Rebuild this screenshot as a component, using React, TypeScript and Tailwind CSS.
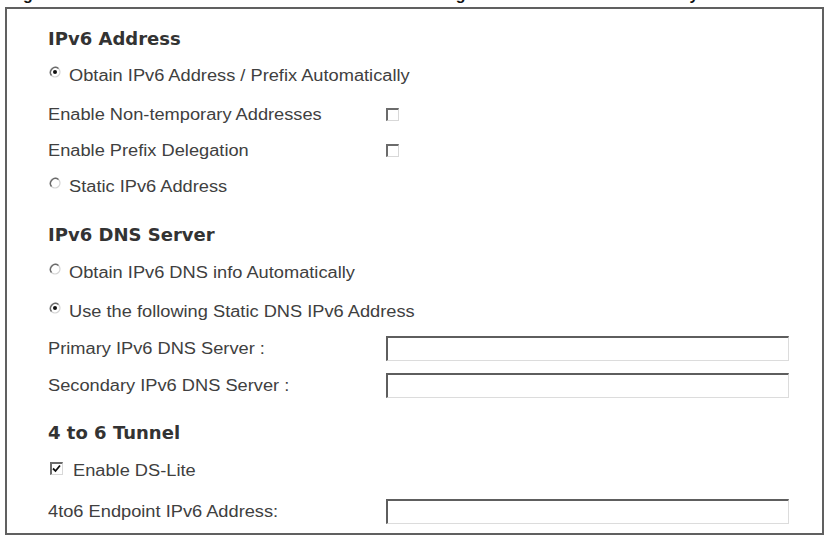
import { ReactNode } from "react";

const body = "font-['Liberation_Sans',Arial,sans-serif]";
const head = "font-['DejaVu_Sans',Verdana,sans-serif]";

// old-style sunken radio button
const Radio = ({ checked }: { checked?: boolean }) => (
  <svg width="12" height="12" viewBox="0 0 12 12" className="ml-[1px] mb-[6px] mr-[8px] shrink-0">
    <circle cx="6" cy="6" r="5" fill="#fff" stroke="#d4d4d4" strokeWidth="1.2" />
    <path d="M9.5 2.5 A5 5 0 0 0 2.5 9.5" fill="none" stroke="#6a6a6a" strokeWidth="1.4" />
    {checked && <circle cx="6" cy="6" r="2" fill="#111" />}
  </svg>
);

const Checkbox = ({ checked }: { checked?: boolean }) => (
  <span className="relative inline-block w-[13px] h-[13px] shrink-0 bg-white border-t-2 border-l-2 border-t-[#6b6b6b] border-l-[#6b6b6b] border-b border-r border-b-[#d8d8d8] border-r-[#d8d8d8]">
    {checked && (
      <svg width="11" height="11" viewBox="0 0 11 11" className="absolute -left-[1px] -top-[1px]">
        <path d="M2 5.5 L4.5 8 L9 2.5" fill="none" stroke="#111" strokeWidth="1.8" />
      </svg>
    )}
  </span>
);

const TextBox = () => (
  <input
    type="text"
    className="w-[403px] h-[25px] bg-white outline-none border-t-2 border-l-2 border-t-[#5e5e5e] border-l-[#5e5e5e] border-b border-r border-b-[#dcdcdc] border-r-[#dcdcdc]"
  />
);

const Row = ({ children, mt = "" }: { children: ReactNode; mt?: string }) => (
  <div className={`flex items-center h-9 ${mt}`}>{children}</div>
);

const Heading = ({ children, mt = "" }: { children: ReactNode; mt?: string }) => (
  <div className={`flex items-center h-9 ${mt}`}>
    <h2 className={`${head} inline-block origin-left scale-x-[1.06] font-bold text-[17px] text-[#333]`}>{children}</h2>
  </div>
);

const Label = ({ children, wide }: { children: ReactNode; wide?: boolean }) => (
  <span className={`${wide ? "w-[338px] shrink-0" : ""}`}>
    <span className={`${body} inline-block origin-left scale-x-[1.14] whitespace-nowrap text-[16px] text-[#404040]`}>{children}</span>
  </span>
);

export default function App() {
  return (
    <div className="w-[826px] h-[540px] bg-white overflow-hidden">
      {/* tail of the caption above the panel */}
      <div className={`h-[6px] overflow-hidden ${body} text-[16px] leading-[16px] font-bold text-[#111]`}>
        <div className="flex -mt-[13px]">
          <span className="ml-[23px]">g</span>
          <span className="ml-[423px]">g</span>
          <span className="ml-[224px]">y</span>
        </div>
      </div>

      <div className="ml-[5px] mt-[1px] w-[819px] h-[528px] border-2 border-[#606060] pl-[41px] pt-[13px]">
        <Heading>IPv6 Address</Heading>
        <Row mt="-mt-px">
          <Radio checked />
          <Label>Obtain IPv6 Address / Prefix Automatically</Label>
        </Row>
        <Row mt="mt-[3px]">
          <Label wide>Enable Non-temporary Addresses</Label>
          <Checkbox />
        </Row>
        <Row>
          <Label wide>Enable Prefix Delegation</Label>
          <Checkbox />
        </Row>
        <Row>
          <Radio />
          <Label>Static IPv6 Address</Label>
        </Row>

        <Heading mt="mt-[14px]">IPv6 DNS Server</Heading>
        <Row>
          <Radio />
          <Label>Obtain IPv6 DNS info Automatically</Label>
        </Row>
        <Row mt="mt-[3px]">
          <Radio checked />
          <Label>Use the following Static DNS IPv6 Address</Label>
        </Row>
        <Row mt="mt-px">
          <Label wide>Primary IPv6 DNS Server :</Label>
          <TextBox />
        </Row>
        <Row mt="mt-px">
          <Label wide>Secondary IPv6 DNS Server :</Label>
          <TextBox />
        </Row>

        <Heading mt="mt-[13px]">4 to 6 Tunnel</Heading>
        <Row>
          <span className="ml-[2px] mr-[10px] mb-[2px]">
            <Checkbox checked />
          </span>
          <Label>Enable DS-Lite</Label>
        </Row>
        <Row mt="mt-[5px]">
          <Label wide>4to6 Endpoint IPv6 Address:</Label>
          <TextBox />
        </Row>
      </div>
    </div>
  );
}
